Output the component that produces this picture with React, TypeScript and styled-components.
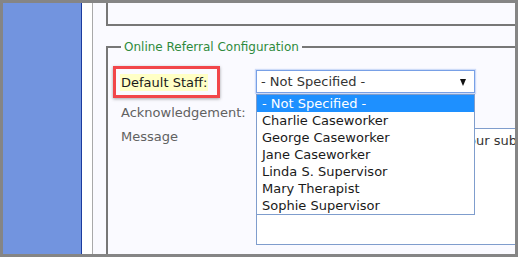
import React from "react";
import styled, { createGlobalStyle } from "styled-components";

const GlobalStyle = createGlobalStyle`
  html, body { margin: 0; padding: 0; background: #ffffff; }
  body { font-family: "DejaVu Sans", Verdana, sans-serif; }
  * { box-sizing: border-box; }
`;

const Frame = styled.div`
  width: 518px;
  height: 257px;
  border: 3px solid #858585;
  display: flex;
  overflow: hidden;
  background: #fafaff;
`;

const Sidebar = styled.div`
  width: 79px;
  flex: none;
  background: #7294df;
  border-right: 1px solid #1b3b9f;
`;

const Gutter = styled.div`
  width: 11px;
  flex: none;
  background: #ffffff;
  border-right: 1px solid #a9a9a9;
`;

const Main = styled.div`
  flex: 1;
  min-width: 0;
  padding-left: 13px;
  overflow: hidden;
  position: relative;
`;

const TopPanel = styled.div`
  height: 23px;
  border-left: 2px solid #777777;
  border-bottom: 2px solid #777777;
`;

const Fieldset = styled.fieldset`
  margin: 14px 0 0 0;
  padding: 16px 0 0 13px;
  min-width: 0;
  height: 240px;
  border: none;
  border-left: 2px solid #777777;
  border-top: 2px solid #777777;
`;

const Legend = styled.legend`
  padding: 0 3px;
  margin: 0;
  font-size: 12px;
  line-height: 14px;
  color: #2e8a3c;
`;

const Form = styled.div`
  display: grid;
  grid-template-columns: 136px auto;
  grid-template-rows: 23px 35px auto;
  position: relative;
`;

const Label = styled.div<{ $top: number }>`
  font-size: 13px;
  line-height: 15px;
  color: #616161;
  padding-top: ${(p) => p.$top}px;
  white-space: nowrap;
`;

const Highlighted = styled.span`
  display: inline-block;
  position: relative;
  margin-left: -1px;
  padding: 1px 1px;
  background: #ffffc6;
  color: #1a1a1a;

  &::after {
    content: "";
    position: absolute;
    top: -8px;
    left: -7px;
    right: -12px;
    bottom: -7px;
    border: 3px solid #f2464a;
    box-shadow: 0 1px 3px rgba(0, 0, 0, 0.35);
  }
`;

const SelectBox = styled.div`
  position: relative;
  margin-left: -1px;
  width: 219px;
  height: 23px;
  background: #ffffff;
  border: 1px solid #78a0e6;
  box-shadow: 0 0 1px 1px rgba(120, 160, 235, 0.35);
  display: flex;
  align-items: center;
  justify-content: space-between;
  padding: 0 8px 0 4px;
  font-size: 13px;
  color: #333333;
`;

const Arrow = styled.span`
  width: 0;
  height: 0;
  border-left: 3.5px solid transparent;
  border-right: 3.5px solid transparent;
  border-top: 7px solid #111111;
  margin-top: 1px;
`;

const List = styled.ul`
  position: absolute;
  top: 23px;
  left: -1px;
  width: 219px;
  margin: 0;
  padding: 0;
  list-style: none;
  background: #ffffff;
  border: 1px solid #7f9dcd;
  z-index: 2;
`;

const Option = styled.li<{ $selected?: boolean }>`
  height: 17px;
  line-height: 17px;
  padding-left: 5px;
  font-size: 13px;
  white-space: nowrap;
  color: ${(p) => (p.$selected ? "#ffffff" : "#1a1a1a")};
  background: ${(p) => (p.$selected ? "#1e90ff" : "transparent")};
`;

const Blank = styled.div``;

const MessageBox = styled.textarea`
  display: block;
  margin: 0 0 0 -1px;
  width: 360px;
  height: 117px;
  padding: 4px 3px 4px 6px;
  border: 1px solid #7f9dcd;
  border-right: none;
  background: #ffffff;
  font-family: "DejaVu Sans", Verdana, sans-serif;
  font-size: 13px;
  line-height: 15px;
  color: #333333;
  resize: none;
  outline: none;
  overflow: hidden;
`;

const staff = [
  "- Not Specified -",
  "Charlie Caseworker",
  "George Caseworker",
  "Jane Caseworker",
  "Linda S. Supervisor",
  "Mary Therapist",
  "Sophie Supervisor",
];

export default function App() {
  return (
    <>
      <GlobalStyle />
      <Frame>
        <Sidebar />
        <Gutter />
        <Main>
          <TopPanel />
          <Fieldset>
            <Legend>Online Referral Configuration</Legend>
            <Form>
              <Label $top={4}>
                <Highlighted>Default Staff:</Highlighted>
              </Label>
              <SelectBox>
                <span>- Not Specified -</span>
                <Arrow />
                <List>
                  {staff.map((s, i) => (
                    <Option key={s} $selected={i === 0}>
                      {s}
                    </Option>
                  ))}
                </List>
              </SelectBox>
              <Label $top={12}>Acknowledgement:</Label>
              <Blank />
              <Label $top={1}>Message</Label>
              <MessageBox
                readOnly
                value="Thank you! We have received your submission."
              />
            </Form>
          </Fieldset>
        </Main>
      </Frame>
    </>
  );
}
